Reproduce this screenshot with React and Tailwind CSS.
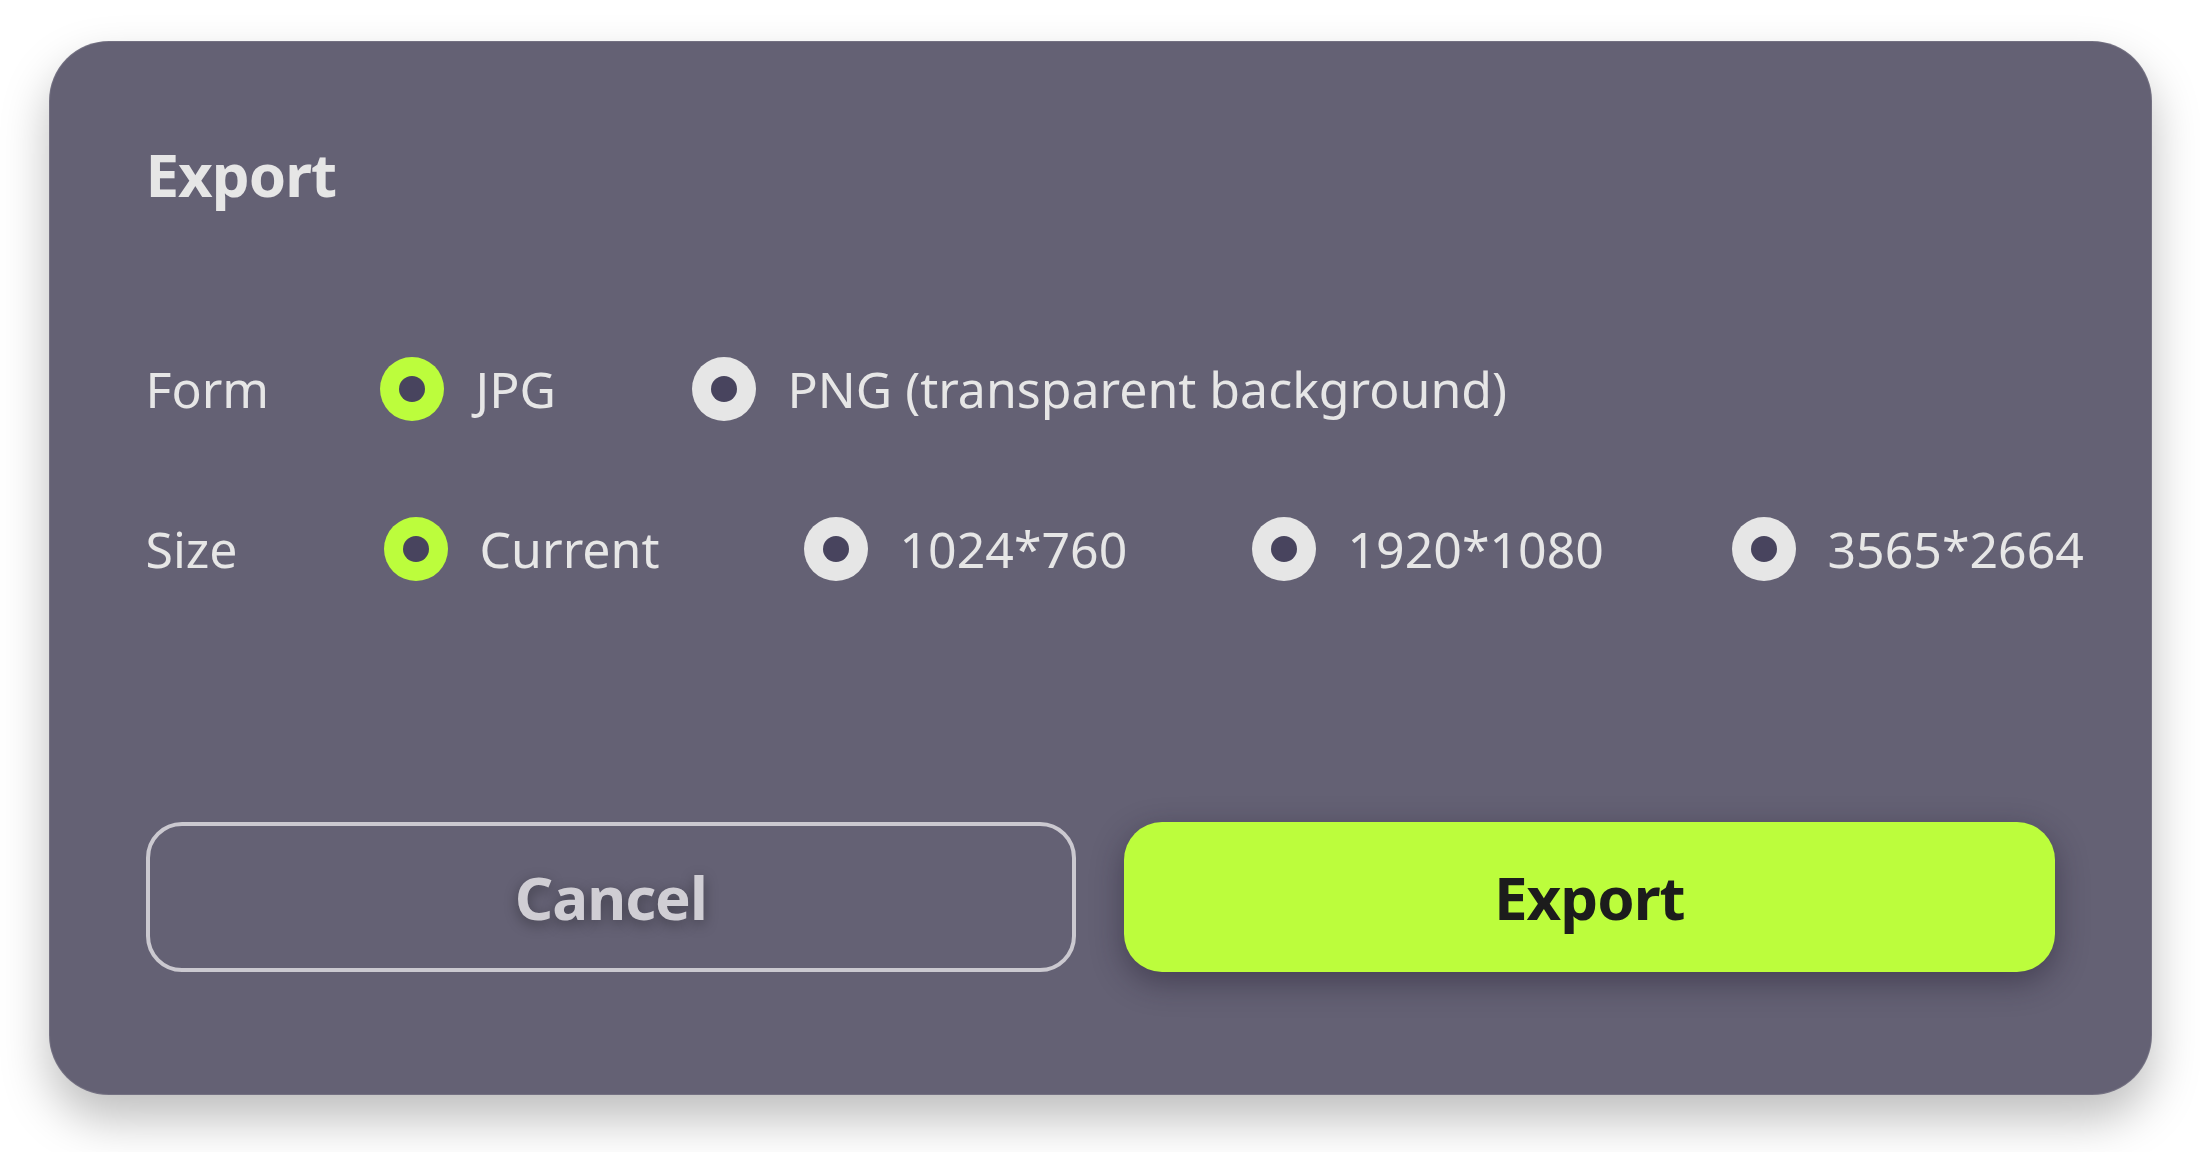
import { useState } from 'react'

const formOptions = [
  { id: 'jpg', label: 'JPG', width: 'w-[312px]' },
  { id: 'png', label: 'PNG (transparent background)', width: '' },
]

const sizeOptions = [
  { id: 'current', label: 'Current', width: 'w-[420px]' },
  { id: '1024', label: '1024*760', width: 'w-[448px]' },
  { id: '1920', label: '1920*1080', width: 'w-[480px]' },
  { id: '3565', label: '3565*2664', width: '' },
]

function Radio({ checked, label, width, onClick }) {
  return (
    <button
      type="button"
      onClick={onClick}
      className={`flex items-center gap-8 shrink-0 text-left ${width}`}
    >
      <span
        className={`w-16 h-16 rounded-full flex items-center justify-center shrink-0 ${
          checked ? 'bg-[#bcfd3c]' : 'bg-[#e6e6e6]'
        }`}
      >
        <span className="w-[26px] h-[26px] rounded-full bg-[#48445e]"></span>
      </span>
      <span className="text-[50px] leading-none text-[#e6e6e6] whitespace-nowrap">
        {label}
      </span>
    </button>
  )
}

function OptionRow({ title, labelWidth, options, value, onChange }) {
  return (
    <div className="flex items-center h-16">
      <div className={`text-[50px] leading-none text-[#e6e6e6] shrink-0 ${labelWidth}`}>
        {title}
      </div>
      {options.map((opt) => (
        <Radio
          key={opt.id}
          label={opt.label}
          width={opt.width}
          checked={value === opt.id}
          onClick={() => onChange(opt.id)}
        />
      ))}
    </div>
  )
}

export default function App() {
  const [format, setFormat] = useState('jpg')
  const [size, setSize] = useState('current')

  return (
    <div
      className="min-h-screen bg-white flex justify-center pt-[41px]"
      style={{ fontFamily: '"Noto Sans", "Open Sans", sans-serif' }}
    >
      <div className="w-[2103px] h-[1054px] rounded-[60px] bg-[#646174] border border-white/10 shadow-[0_24px_48px_rgba(0,0,0,0.26)] px-24 pt-[102px] flex flex-col">
        <h1 className="text-[60px] leading-none font-bold tracking-[-1px] text-[#e6e6e6]">
          Export
        </h1>

        <div className="mt-[153px] flex flex-col gap-24">
          <OptionRow
            title="Form"
            labelWidth="w-[234px]"
            options={formOptions}
            value={format}
            onChange={setFormat}
          />
          <OptionRow
            title="Size"
            labelWidth="w-[238px]"
            options={sizeOptions}
            value={size}
            onChange={setSize}
          />
        </div>

        <div className="mt-[241px] grid grid-cols-2 gap-12">
          <button
            type="button"
            className="h-[150px] rounded-[36px] border-4 border-[#cbc9d0] text-[60px] leading-none font-bold tracking-[-1px] text-[#d0ced4] [text-shadow:0_4px_14px_rgba(0,0,0,0.35)]"
          >
            Cancel
          </button>
          <button
            type="button"
            className="h-[150px] rounded-[38px] bg-[#bcfd3c] text-[60px] leading-none font-bold tracking-[-1px] text-[#1c1c1c] shadow-[0_10px_32px_rgba(30,25,45,0.45)]"
          >
            Export
          </button>
        </div>
      </div>
    </div>
  )
}
